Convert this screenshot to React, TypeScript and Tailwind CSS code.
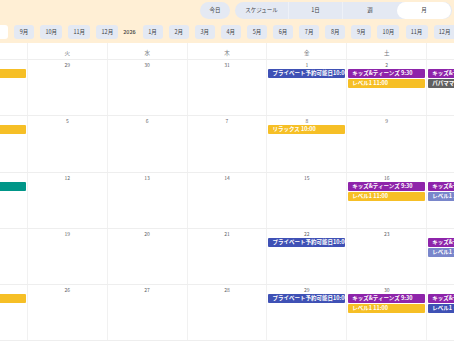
import React from 'react';

type Ev = { label: string; color: string };

const BLUE = 'bg-[#3f51b5]';
const PURPLE = 'bg-[#8e24aa]';
const YELLOW = 'bg-[#f6bf26]';
const GRAY = 'bg-[#616161]';
const LAVENDER = 'bg-[#7986cb]';
const TEAL = 'bg-[#009688]';

const kids: Ev = { label: 'キッズ&ティーンズ 9:30', color: PURPLE };
const level1: Ev = { label: 'レベル1 11:00', color: YELLOW };
const priv: Ev = { label: 'プライベート予約可能日10:00', color: BLUE };

// 7 columns Mon..Sun, the page is scrolled so Mon and Sun are cut off
const weeks: { dates: number[]; events: Ev[][] }[] = [
  {
    dates: [28, 29, 30, 31, 1, 2, 3],
    events: [[level1], [], [], [], [priv], [kids, level1], [kids, { label: 'パパママヨガ 11:00', color: GRAY }]],
  },
  {
    dates: [4, 5, 6, 7, 8, 9, 10],
    events: [[level1], [], [], [], [{ label: 'リラックス 10:00', color: YELLOW }], [], []],
  },
  {
    dates: [11, 12, 13, 14, 15, 16, 17],
    events: [[{ label: 'ヨガ 19:00', color: TEAL }], [], [], [], [], [kids, level1], [kids, { label: 'レベル1 11:00', color: LAVENDER }]],
  },
  {
    dates: [18, 19, 20, 21, 22, 23, 24],
    events: [[], [], [], [], [priv], [], [kids, { label: 'レベル1 11:00', color: LAVENDER }]],
  },
  {
    dates: [25, 26, 27, 28, 29, 30, 31],
    events: [[level1], [], [], [], [priv], [kids, level1], [kids, { label: 'レベル1・2 11:00', color: BLUE }]],
  },
];

const days = ['月', '火', '水', '木', '金', '土', '日'];
const months = ['9月', '10月', '11月', '12月'];
const months2 = ['1月', '2月', '3月', '4月', '5月', '6月', '7月', '8月', '9月', '10月', '11月', '12月'];
const views = ['スケジュール', '1日', '週', '月'];

const MonthBtn: React.FC<{ label: string }> = ({ label }) => (
  <div
    className={`h-[14px] ${label.length > 2 ? 'w-[22px]' : 'w-[20px]'} shrink-0 rounded-[3px] bg-[#e4e9f3] flex items-center justify-center text-[5.5px] text-[#3c4043]`}
  >
    {label}
  </div>
);

export default function App() {
  return (
    <div className="w-[454px] h-[341px] overflow-hidden bg-white font-['Noto_Sans_CJK_JP',sans-serif] text-[#3c4043]">
      {/* toolbar */}
      <div className="h-[43px] bg-[#ffefd5] pt-[2px]">
        <div className="flex justify-end items-center gap-[5px] pr-[2px] h-[17px]">
          <div className="w-[30px] h-[17px] rounded-full bg-[#e4e9f3] flex items-center justify-center text-[5.5px]">今日</div>
          <div className="w-[217px] h-[17px] rounded-full bg-[#e4e9f3] flex items-center">
            {views.map((v, i) => (
              <div
                key={v}
                className={`w-[54px] h-[17px] flex items-center justify-center text-[5.5px] ${
                  i === 3 ? 'bg-white rounded-full' : i < 2 ? 'border-r border-[#eef1f7]' : ''
                }`}
              >
                {v}
              </div>
            ))}
          </div>
        </div>
        <div className="flex items-center gap-[6.1px] mt-[6px] -ml-[22px]">
          <div className="w-[30px] h-[14px] shrink-0 rounded-[3px] bg-white" />
          {months.map((m, i) => (
            <MonthBtn key={'a' + i} label={m} />
          ))}
          <span className="w-[16px] shrink-0 -ml-[3px] -mr-[1px] text-center text-[5.5px] font-medium">2026</span>
          {months2.map((m, i) => (
            <MonthBtn key={'b' + i} label={m} />
          ))}
        </div>
      </div>

      {/* calendar grid */}
      <div className="w-[559px] -ml-[53px]">
        <div className="grid grid-cols-7 h-[17px] border-b border-[#eeeeee]">
          {days.map((d) => (
            <div key={d} className="border-l border-[#f1f1f1] flex items-center justify-center text-[5.5px] text-[#70757a] pt-[4px]">
              {d}
            </div>
          ))}
        </div>
        {weeks.map((w, wi) => (
          <div key={wi} className="grid grid-cols-7 h-[56.25px] border-b border-[#eeeeee]">
            {w.dates.map((d, di) => (
              <div key={di} className="border-l border-[#f1f1f1] flex flex-col overflow-hidden">
                <div className="h-[9px] pt-[2px] text-center text-[5px] leading-[6px] text-[#5f6368]">{d}</div>
                <div className="flex flex-col gap-[1px] px-[1px]">
                  {w.events[di].map((e, ei) => (
                    <div
                      key={ei}
                      className={`${e.color} h-[9px] rounded-[1px] pl-[4px] text-white text-[5.5px] leading-[9px] font-bold whitespace-nowrap overflow-hidden`}
                    >
                      {e.label}
                    </div>
                  ))}
                </div>
              </div>
            ))}
          </div>
        ))}
      </div>
    </div>
  );
}
